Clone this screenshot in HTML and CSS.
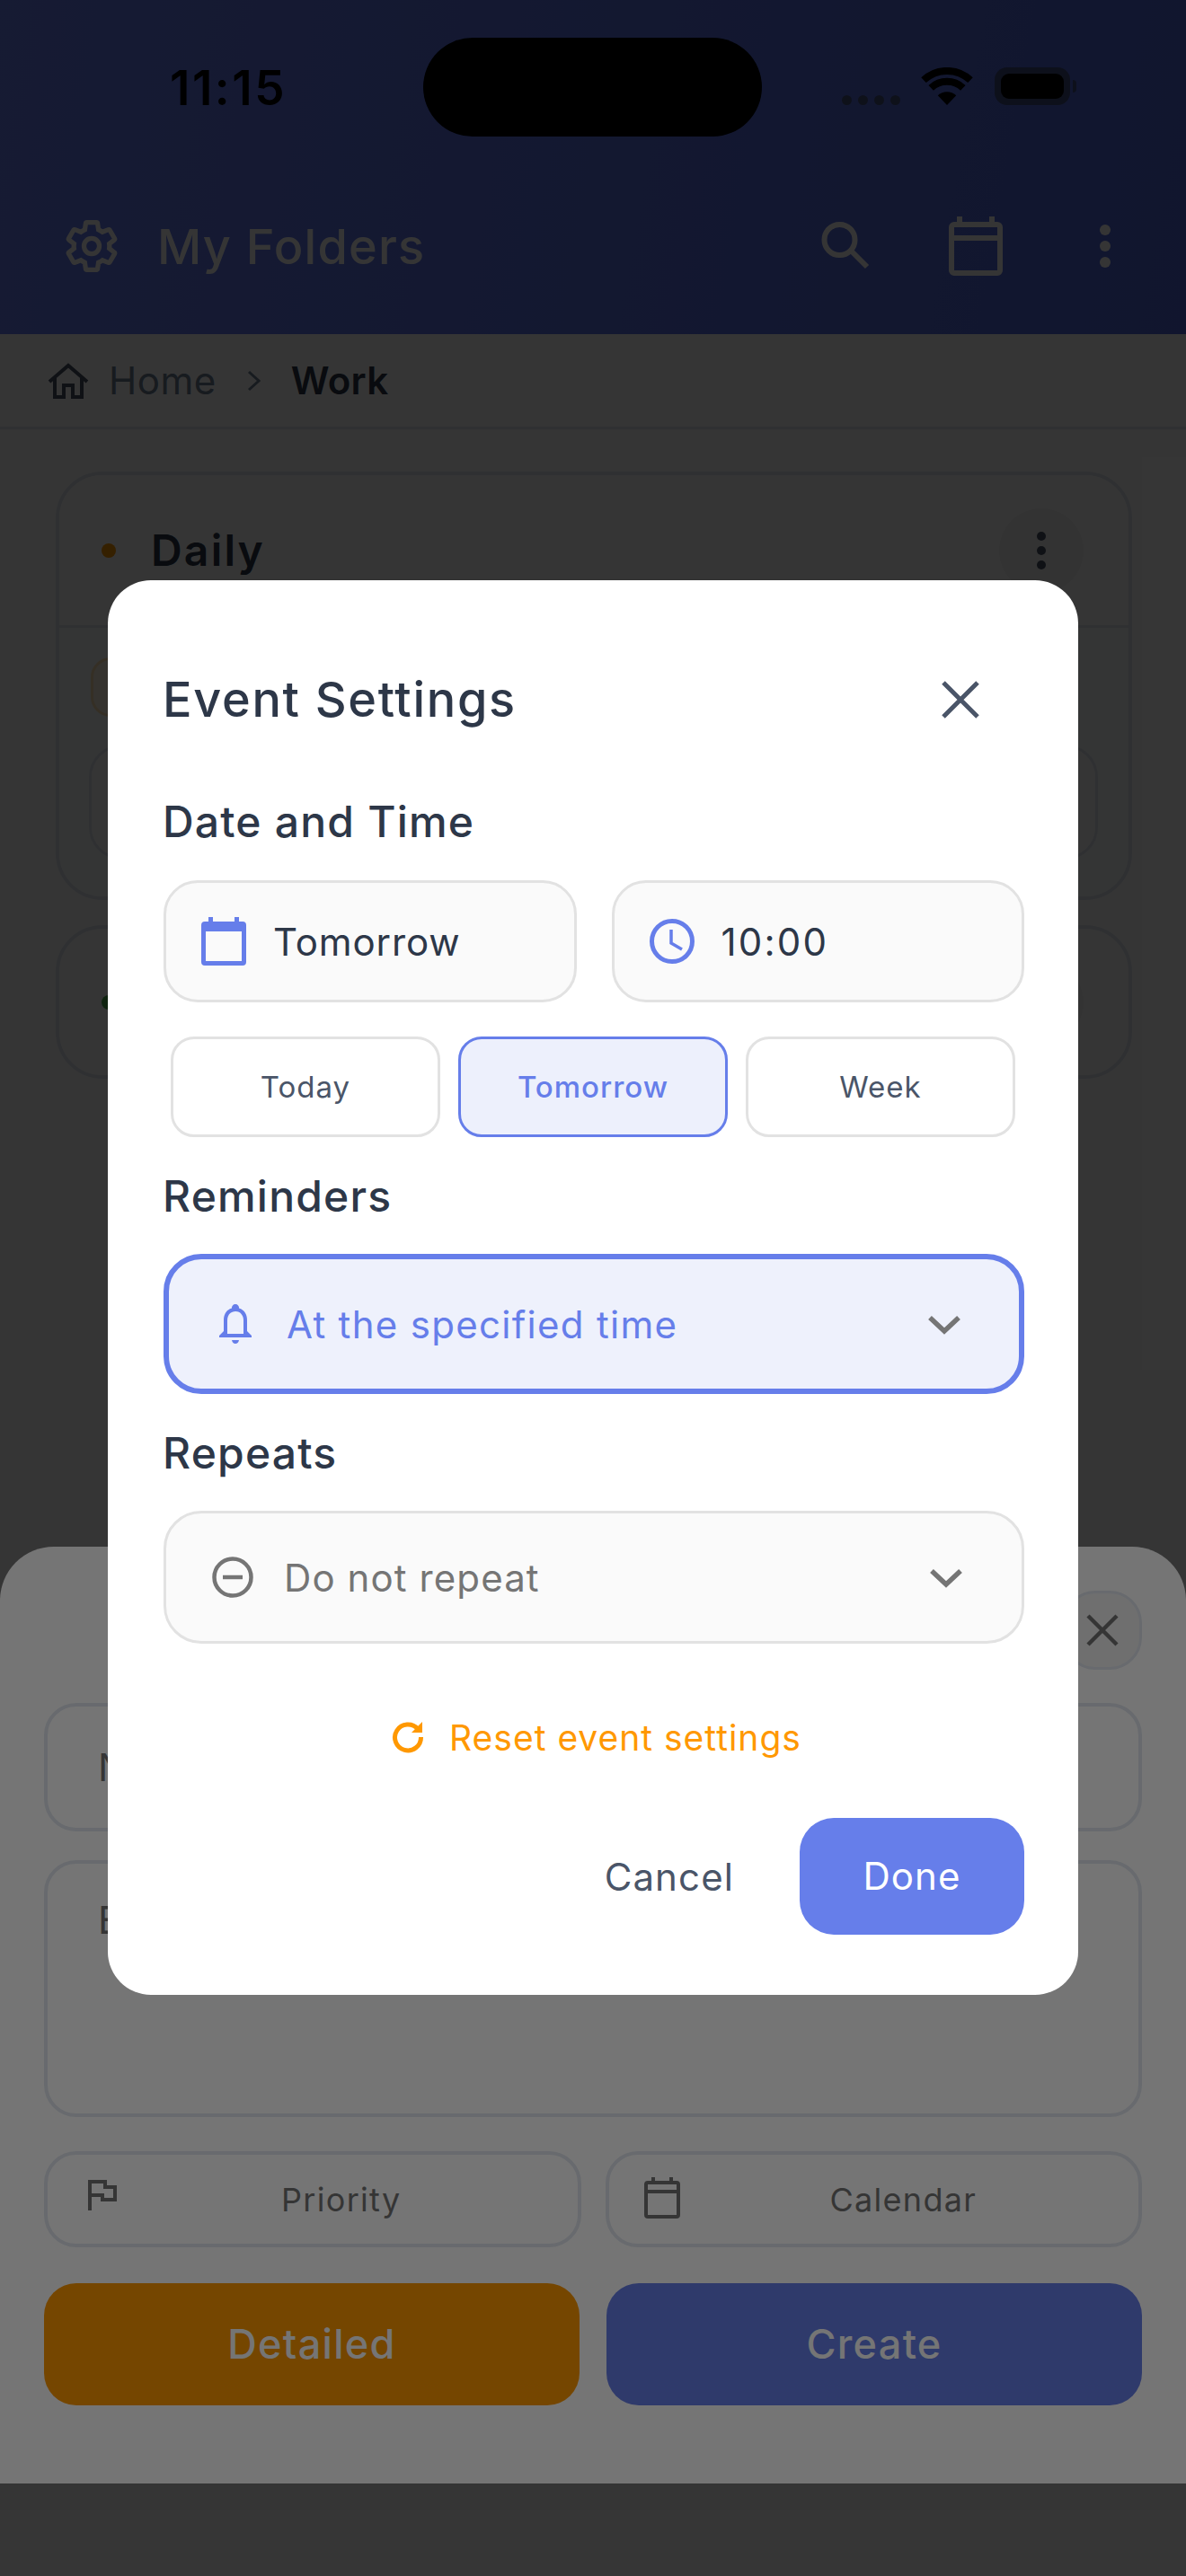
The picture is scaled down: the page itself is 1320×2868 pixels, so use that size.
FILE: index.html
```html
<!doctype html>
<html>
<head>
<meta charset="UTF-8" />
<title>Event Settings</title>
<link rel="stylesheet" href="styles.css">
</head>
<body>
	<div id="screen">
		<header id="app-header">
			<div class="status-bar">
				<span class="clock-text">11:15</span>
				<div class="island"></div>
				<div class="status-icons">
					<div class="signal"><i></i><i></i><i></i><i></i></div>
					<svg class="wifi" width="58" height="42" viewBox="0 0 58 42">
						<path d="M3 14.2A38 38 0 0 1 55 14.2" fill="none" stroke="#000" stroke-width="8"/>
						<path d="M11.2 22.9A26 26 0 0 1 46.8 22.9" fill="none" stroke="#000" stroke-width="8"/>
						<path d="M29 42L18.8 31.3A15 15 0 0 1 39.2 31.3Z" fill="#000"/>
					</svg>
					<div class="battery"><div class="battery-fill"></div></div>
				</div>
			</div>
			<div class="app-bar">
				<svg class="gear" width="66" height="66" viewBox="0 0 24 24" fill="none" stroke="currentColor" stroke-width="1.9">
					<path d="M19.14 12.94c.04-.3.06-.61.06-.94 0-.32-.02-.64-.07-.94l2.03-1.58c.18-.14.23-.41.12-.61l-1.92-3.32c-.12-.22-.37-.29-.59-.22l-2.39.96c-.5-.38-1.03-.7-1.62-.94l-.36-2.54c-.04-.24-.24-.41-.48-.41h-3.84c-.24 0-.43.17-.47.41l-.36 2.54c-.59.24-1.13.57-1.62.94l-2.39-.96c-.22-.08-.47 0-.59.22L2.74 8.87c-.12.21-.08.47.12.61l2.03 1.58c-.05.3-.09.63-.09.94s.02.64.07.94l-2.03 1.58c-.18.14-.23.41-.12.61l1.92 3.32c.12.22.37.29.59.22l2.39-.96c.5.38 1.03.7 1.62.94l.36 2.54c.05.24.24.41.48.41h3.84c.24 0 .44-.17.47-.41l.36-2.54c.59-.24 1.13-.56 1.62-.94l2.39.96c.22.08.47 0 .59-.22l1.92-3.32c.12-.22.07-.47-.12-.61l-2.01-1.58z"/>
					<circle cx="12" cy="12" r="3.1"/>
				</svg>
				<h1 class="app-title">My Folders</h1>
				<svg class="search-icon" width="54" height="54" viewBox="0 0 54 54" fill="none" stroke="currentColor" stroke-width="6">
					<circle cx="20.5" cy="20" r="17"/>
					<path d="M33 32L51 50"/>
				</svg>
				<svg class="cal-icon" width="60" height="66" viewBox="0 0 60 66" fill="none" stroke="currentColor" stroke-width="6">
					<rect x="3" y="9" width="54" height="54" rx="3"/>
					<path d="M3 24H57M12 0V9M48 0V9"/>
				</svg>
				<svg class="more-icon" width="12" height="48" viewBox="0 0 12 48" fill="currentColor">
					<circle cx="6" cy="6" r="6"/><circle cx="6" cy="24" r="6"/><circle cx="6" cy="42" r="6"/>
				</svg>
			</div>
		</header>
		<nav id="crumbs">
			<svg class="home-icon" width="46" height="40" viewBox="0 0 46 40" fill="none" stroke="currentColor" stroke-width="4">
				<path d="M2 21L23 3L44 21M8 17V38H18V25H28V38H38V17"/>
			</svg>
			<span class="crumb-home">Home</span>
			<svg class="crumb-sep" width="15" height="24" viewBox="0 0 15 24" fill="none" stroke="currentColor" stroke-width="3">
				<path d="M2 2L13 12L2 22"/>
			</svg>
			<span class="crumb-work">Work</span>
		</nav>
		<div id="folders">
			<div class="card">
				<div class="card-head">
					<span class="dot dot-orange"></span>
					<span class="card-title">Daily</span>
					<div class="card-menu"><i></i><i></i><i></i></div>
				</div>
				<div class="card-body">
					<div class="chip"></div>
					<div class="task-box"></div>
				</div>
			</div>
			<div class="card card-small">
				<span class="dot dot-green"></span>
				<div class="card-menu"><i></i><i></i><i></i></div>
			</div>
		</div>
	</div>

	<div id="sheet-layer" class="scrim">
		<div id="sheet">
			<div class="sheet-top">
				<div class="sheet-close">
					<svg width="36" height="36" viewBox="0 0 36 36" fill="none" stroke="currentColor" stroke-width="4.5">
						<path d="M2 2L34 34M34 2L2 34"/>
					</svg>
				</div>
			</div>
			<div class="field field-name">Name</div>
			<div class="field field-desc">Event description</div>
			<div class="sheet-row">
				<div class="pick">
					<svg class="pick-flag" width="32" height="34" viewBox="0 0 32 34" fill="none" stroke="currentColor" stroke-width="4">
						<path d="M2 34V2H19V8H30V22H16V17H2"/>
					</svg>
					<span>Priority</span>
				</div>
				<div class="pick">
					<svg class="pick-cal" width="40" height="46" viewBox="0 0 40 46" fill="none" stroke="currentColor" stroke-width="4">
						<rect x="2" y="6" width="36" height="38" rx="2"/>
						<path d="M2 16H38M10 0V6M30 0V6"/>
					</svg>
					<span>Calendar</span>
				</div>
			</div>
			<div class="sheet-actions">
				<div class="big-btn btn-orange">Detailed</div>
				<div class="big-btn btn-blue">Create</div>
			</div>
		</div>
	</div>

	<div id="modal-layer" class="scrim">
		<div id="modal">
			<div class="modal-head">
				<h2 class="modal-title">Event Settings</h2>
				<svg class="modal-x" width="42" height="42" viewBox="0 0 42 42" fill="none" stroke="#4a5568" stroke-width="5">
					<path d="M2 2L40 40M40 2L2 40"/>
				</svg>
			</div>

			<h3 class="label label-date">Date and Time</h3>
			<div class="date-row">
				<div class="date-field">
					<svg width="50" height="54" viewBox="0 0 50 54">
						<path d="M8 0H13V5H37V0H42V5H46Q50 5 50 9V50Q50 54 46 54H4Q0 54 0 50V9Q0 5 4 5H8ZM5 16V49H45V16Z" fill="#667eea" fill-rule="evenodd"/>
					</svg>
					<span>Tomorrow</span>
				</div>
				<div class="date-field">
					<svg width="50" height="50" viewBox="0 0 50 50" fill="none" stroke="#667eea" stroke-width="5">
						<circle cx="25" cy="25" r="22.5"/>
						<path d="M24 12V27L36 34" stroke-width="3.5"/>
					</svg>
					<span class="time-text">10:00</span>
				</div>
			</div>
			<div class="quick-row">
				<div class="quick">Today</div>
				<div class="quick quick-on">Tomorrow</div>
				<div class="quick">Week</div>
			</div>

			<h3 class="label label-rem">Reminders</h3>
			<div class="select select-on">
				<svg class="sel-bell" width="36" height="44" viewBox="0 0 36 44" fill="#667eea">
					<path d="M18 0a4 4 0 0 1 4 4.600C28 6.400 31 11.500 31 18V30L36 35V37H0V35L5 30V18C5 11.500 8 6.400 14 4.600A4 4 0 0 1 18 0ZM18 8C12 8 9 13 9 18V33H27V18C27 13 24 8 18 8Z" fill-rule="evenodd"/>
					<path d="M14 40H22C21.500 42.500 20 44 18 44S14.500 42.500 14 40Z"/>
				</svg>
				<span class="sel-text">At the specified time</span>
				<svg class="chev" width="36" height="22" viewBox="0 0 36 22" fill="none" stroke="#757575" stroke-width="5.500">
					<path d="M2 3L18 18L34 3"/>
				</svg>
			</div>

			<h3 class="label label-rep">Repeats</h3>
			<div class="select select-off">
				<svg class="sel-minus" width="46" height="46" viewBox="0 0 46 46" fill="none" stroke="#757575" stroke-width="4.500">
					<circle cx="23" cy="23" r="20.500"/>
					<path d="M12 23H34"/>
				</svg>
				<span class="sel-text">Do not repeat</span>
				<svg class="chev" width="36" height="22" viewBox="0 0 36 22" fill="none" stroke="#757575" stroke-width="5.500">
					<path d="M2 3L18 18L34 3"/>
				</svg>
			</div>

			<div class="reset">
				<svg width="36" height="36" viewBox="0 0 36 36" fill="none" stroke="#ff9800" stroke-width="5">
					<path d="M29 9A14.500 14.500 0 1 0 32.500 18"/>
					<path d="M34 1V13H22Z" fill="#ff9800" stroke="none"/>
				</svg>
				<span>Reset event settings</span>
			</div>

			<div class="modal-actions">
				<span class="cancel">Cancel</span>
				<div class="done">Done</div>
			</div>
		</div>
	</div>
</body>
</html>
```

FILE: styles.css
```css
*{
	box-sizing:border-box;
}
html, body, h1, h2, h3{
	margin:0;
	padding:0;
}
body{
	position:relative;
	width:1320px;
	height:2868px;
	overflow:hidden;
	background:#fff;
	font-family:Inter, "Liberation Sans", sans-serif;
}
svg{
	display:block;
	flex:none;
}

/* page under the overlays */
#app-header{
	height:372px;
	background:linear-gradient(100deg, #6a80f4, #5268dc);
	color:#fff;
}
.status-bar{
	height:208px;
	display:flex;
	align-items:flex-start;
	padding:42px 0 0 189px;
}
.clock-text{
	width:282px;
	margin-top:28px;
	font-size:53px;
	line-height:56px;
	font-weight:600;
	letter-spacing:2.5px;
	color:#000;
}
.island{
	width:377px;
	height:110px;
	border-radius:55px;
	background:#000;
}
.status-icons{
	display:flex;
	align-items:flex-end;
	margin:33px 0 0 89px;
}
.signal{
	display:flex;
	gap:7px;
}
.signal i{
	width:11px;
	height:11px;
	border-radius:50%;
	background:#46547f;
}
.wifi{
	margin-left:23px;
}
.battery{
	position:relative;
	width:84px;
	height:42px;
	margin-left:24px;
	padding:7px 7px;
	border-radius:14px;
	background:#404e80;
}
.battery:after{
	content:"";
	position:absolute;
	left:87px;
	top:14px;
	width:4px;
	height:14px;
	border-radius:0 4px 4px 0;
	background:#404e80;
}
.battery-fill{
	height:100%;
	border-radius:9px;
	background:#000;
}
.app-bar{
	display:flex;
	align-items:center;
	height:132px;
	padding:0 84px 0 69px;
}
.app-title{
	flex:1;
	margin-left:40px;
	font-size:54px;
	font-weight:500;
	letter-spacing:1.2px;
}
.search-icon{
	margin-right:88px;
}
.cal-icon{
	margin-right:108px;
}
#crumbs{
	display:flex;
	align-items:center;
	height:106px;
	padding:0 0 0 53px;
	border-bottom:3px solid #e2e8f0;
	font-size:42px;
}
.home-icon{
	color:#4a5568;
	margin-right:22px;
}
.crumb-home{
	color:#718096;
	letter-spacing:.5px;
}
.crumb-sep{
	margin:0 34px;
	color:#718096;
}
.crumb-work{
	color:#2d3748;
	font-weight:600;
	letter-spacing:.3px;
}
#folders{
	padding:47px 60px 0 62px;
}
.card{
	border:4px solid #e2e8f0;
	border-radius:52px;
	overflow:hidden;
}
.card-head{
	display:flex;
	align-items:center;
	height:170px;
	padding:0 50px 0 47px;
	border-bottom:3px solid #e2e8f0;
	background:#fff;
}
.dot{
	width:16px;
	height:16px;
	border-radius:50%;
}
.dot-orange{
	background:#ff9800;
}
.dot-green{
	background:#4caf50;
}
.card-title{
	flex:1;
	margin-left:39px;
	font-size:48px;
	font-weight:600;
	letter-spacing:2.2px;
	color:#2d3748;
}
.card-menu{
	display:flex;
	flex-direction:column;
	align-items:center;
	justify-content:center;
	gap:6px;
	width:94px;
	height:94px;
	border-radius:50%;
	background:#f2f2f2;
}
.card-menu i{
	width:10px;
	height:10px;
	border-radius:50%;
	background:#4a5568;
}
.card-body{
	padding:33px 34px 41px 33px;
	background:#f7fafc;
}
.chip{
	width:200px;
	height:66px;
	margin-left:2px;
	border:3px solid #ffe0b2;
	border-radius:22px;
	background:#fff3e0;
}
.task-box{
	height:128px;
	margin-top:31px;
	border:3px solid #e2e8f0;
	border-radius:36px;
	background:#fff;
}
.card-small{
	display:flex;
	align-items:center;
	justify-content:space-between;
	height:171px;
	margin-top:28px;
	padding:0 50px 0 47px;
}

/* both overlays dim what is under them */
.scrim{
	position:absolute;
	left:0;
	top:0;
	width:1320px;
	height:2868px;
	background:rgba(0,0,0,.54);
}

/* bottom sheet */
#sheet-layer{
	display:flex;
	flex-direction:column;
	justify-content:flex-end;
	padding-bottom:103px;
}
#sheet{
	height:1043px;
	padding:49px 49px 0;
	border-radius:60px 60px 0 0;
	background:#fff;
	color:#757575;
}
.sheet-top{
	display:flex;
	justify-content:flex-end;
}
.sheet-close{
	display:flex;
	align-items:center;
	justify-content:center;
	width:88px;
	height:88px;
	border:3px solid #e2e8f0;
	border-radius:36px;
	background:#f2f2f2;
}
.field{
	padding:0 56px;
	border:4px solid #e2e8f0;
	border-radius:36px;
	font-size:42px;
}
.field-name{
	height:143px;
	margin-top:37px;
	line-height:135px;
}
.field-desc{
	height:286px;
	margin-top:32px;
	padding-top:38px;
	line-height:50px;
}
.sheet-row{
	display:flex;
	gap:27px;
	margin-top:38px;
}
.pick{
	flex:1;
	display:flex;
	align-items:center;
	height:107px;
	padding:0 13px 0 0;
	border:4px solid #e2e8f0;
	border-radius:36px;
	font-size:36px;
	letter-spacing:1.3px;
}
.pick span{
	flex:1;
	text-align:center;
}
.pick-flag{
	margin:-9px 0 0 45px;
}
.pick-cal{
	margin:-4px 0 0 39px;
}
.sheet-actions{
	display:flex;
	gap:30px;
	margin-top:40px;
}
.big-btn{
	flex:1;
	height:136px;
	border-radius:36px;
	font-size:45px;
	line-height:136px;
	font-weight:500;
	letter-spacing:1.3px;
	text-align:center;
	color:#fff;
}
.btn-orange{
	background:#ff9800;
}
.btn-blue{
	background:#667eea;
}

/* event settings dialog */
#modal-layer{
	padding:646px 120px 0;
}
#modal{
	height:1575px;
	padding:100px 60px 0 62px;
	border-radius:48px;
	background:#fff;
}
.modal-head{
	display:flex;
	align-items:center;
	justify-content:space-between;
	height:66px;
	padding-right:50px;
}
.modal-title{
	margin-left:-1px;
	font-size:54px;
	line-height:66px;
	font-weight:500;
	letter-spacing:1.7px;
	color:#2d3748;
}
.label{
	margin-left:-1px;
	font-size:48px;
	line-height:58px;
	font-weight:500;
	letter-spacing:1.2px;
	color:#2d3748;
}
.label-date{
	margin-top:74px;
}
.label-rem{
	margin-top:37px;
}
.label-rep{
	margin-top:37px;
}
.date-row{
	display:flex;
	gap:39px;
	margin-top:36px;
}
.date-field{
	flex:1;
	display:flex;
	align-items:center;
	gap:30px;
	height:136px;
	padding-left:39px;
	border:3px solid #e2e2e2;
	border-radius:38px;
	background:#fafafa;
	font-size:42px;
	letter-spacing:.9px;
	color:#2d3748;
}
.time-text{
	letter-spacing:2.2px;
}
.quick-row{
	display:flex;
	gap:20px;
	margin-top:38px;
	padding:0 10px 0 8px;
}
.quick{
	flex:1;
	height:112px;
	border:3px solid #e2e2e2;
	border-radius:26px;
	font-size:33px;
	line-height:106px;
	letter-spacing:1px;
	text-align:center;
	color:#4a5568;
}
.quick-on{
	border-color:#667eea;
	background:#edf0fc;
	color:#667eea;
	font-weight:500;
}
.select{
	display:flex;
	align-items:center;
	margin-top:35px;
	border-radius:42px;
	font-size:42px;
	letter-spacing:1.3px;
}
.select-on{
	height:156px;
	padding:0 65px 0 56px;
	border:6px solid #667eea;
	background:#eef1fc;
	color:#667eea;
}
.select-off{
	height:148px;
	padding:0 66px 0 51px;
	border:3px solid #e2e2e2;
	background:#fafafa;
	color:#757575;
	letter-spacing:1.1px;
}
.sel-text{
	flex:1;
}
.sel-bell{
	margin-right:39px;
}
.sel-minus{
	margin-right:34px;
}
.chev{
	margin-top:2px;
}
.reset{
	display:flex;
	align-items:center;
	justify-content:center;
	gap:28px;
	height:60px;
	margin-top:74px;
	padding-left:6px;
	font-size:39px;
	letter-spacing:1px;
	color:#ff9800;
}
.modal-actions{
	display:flex;
	align-items:center;
	justify-content:flex-end;
	gap:73px;
	margin-top:60px;
	font-size:42px;
	letter-spacing:1.1px;
}
.cancel{
	color:#4a5568;
}
.done{
	width:250px;
	height:130px;
	border-radius:38px;
	background:#667eea;
	line-height:130px;
	text-align:center;
	color:#fff;
}
```
